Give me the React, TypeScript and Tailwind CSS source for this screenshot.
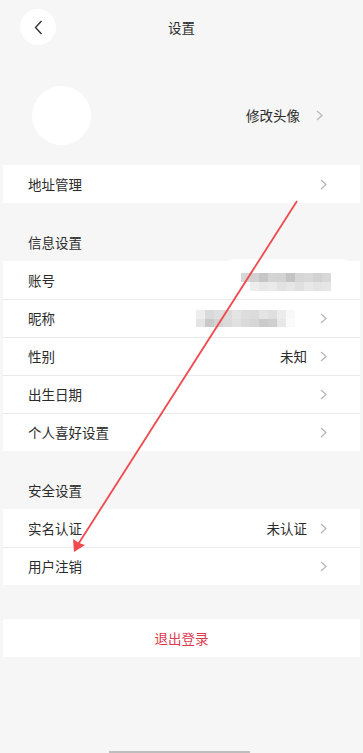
import React from "react";

const font = "font-['Noto_Sans_CJK_SC','Noto_Sans',sans-serif]";

function Chevron() {
  return (
    <svg width="7" height="11" viewBox="0 0 7 11" className="shrink-0">
      <polyline points="1,1 6,5.5 1,10" fill="none" stroke="#b5b5b5" strokeWidth="1.2" />
    </svg>
  );
}

const accountTop = ["#d6d6d6", "#d2d2d2", "#c6c6c6", "#d4d4d4", "#d3d3d3", "#c4c4c4", "#d6d6d6", "#d9d9d9", "#d2d2d2", "#d8d8d8"];
const accountBottom = ["#ffffff", "#eeeeee", "#e8e8e8", "#eaeaea", "#e2e2e2", "#e6e6e6", "#e0e0e0", "#e8e8e8", "#e4e4e4", "#e6e6e6"];
const nickTop = ["#ececec", "#d6d6d6", "#dcdcdc", "#d8d8d8", "#e2e2e2", "#dadada", "#d8d8d8", "#e2e2e2", "#dcdcdc", "#ebebeb", "#f8f8f8", "#ffffff"];
const nickBottom = ["#e2e2e2", "#c4c4c4", "#d0d0d0", "#d6d6d6", "#dedede", "#d6d6d6", "#d2d2d2", "#c6c6c6", "#cacaca", "#e6e6e6", "#fafafa", "#ffffff"];

function Mosaic({ top, bottom, h }: { top: string[]; bottom: string[]; h: number }) {
  return (
    <div className="flex flex-col">
      {[top, bottom].map((row, r) => (
        <div key={r} className="flex">
          {row.map((c, i) => (
            <div key={i} className="w-[9px]" style={{ background: c, height: h }} />
          ))}
        </div>
      ))}
    </div>
  );
}

function Row({
  label,
  value,
  first,
  children,
}: {
  label: string;
  value?: string;
  first?: boolean;
  children?: React.ReactNode;
}) {
  return (
    <div className={`relative flex h-[38px] items-center pl-[25px] pr-[33px] ${first ? "" : "border-t border-[#e9e9e9]"}`}>
      <span className="flex-1 text-[13.5px] text-[#2b2b2b]">{label}</span>
      {value && <span className="mr-[13px] text-[13.5px] text-[#2b2b2b]">{value}</span>}
      <Chevron />
      {children}
    </div>
  );
}

function SectionTitle({ title }: { title: string }) {
  return (
    <div className="flex h-[58px] items-end pb-[9px] pl-[28px] text-[13.5px] leading-[20px] text-[#2b2b2b]">{title}</div>
  );
}

export default function App() {
  return (
    <div className={`relative min-h-screen w-[363px] overflow-hidden bg-[#f6f6f6] ${font}`}>
      {/* header */}
      <div className="relative flex h-[54px] items-center justify-center">
        <div className="absolute left-[20px] top-[9px] flex h-[36px] w-[36px] items-center justify-center rounded-full bg-white">
          <svg width="9" height="15" viewBox="0 0 9 15">
            <polyline points="7.5,1 1.5,7.5 7.5,14" fill="none" stroke="#333" strokeWidth="1.4" />
          </svg>
        </div>
        <span className="text-[13.5px] text-[#2b2b2b]">设置</span>
      </div>

      {/* avatar */}
      <div className="mt-[32px] flex h-[59px] items-center pl-[32px] pr-[40px]">
        <div className="h-[59px] w-[59px] rounded-full bg-white" />
        <span className="ml-auto mr-[16px] text-[13.5px] text-[#2b2b2b]">修改头像</span>
        <Chevron />
      </div>

      <div className="mx-[3px] mt-[20px] bg-white">
        <Row label="地址管理" first />
      </div>

      <SectionTitle title="信息设置" />
      <div className="mx-[3px] bg-white">
        <Row label="账号" first>
          <div className="absolute left-[214px] top-[-2px] h-[40px] w-[142px] rounded-[18px] bg-white" />
          <div className="absolute left-[238px] top-[12px]">
            <Mosaic top={accountTop} bottom={accountBottom} h={9} />
          </div>
        </Row>
        <Row label="昵称">
          <div className="absolute left-[193px] top-[10px] opacity-90">
            <Mosaic top={nickTop} bottom={nickBottom} h={8.5} />
          </div>
        </Row>
        <Row label="性别" value="未知" />
        <Row label="出生日期" />
        <Row label="个人喜好设置" />
      </div>

      <SectionTitle title="安全设置" />
      <div className="mx-[3px] bg-white">
        <Row label="实名认证" value="未认证" first />
        <Row label="用户注销" />
      </div>

      <div className="mx-[3px] mt-[34px] flex h-[38px] items-center justify-center bg-white">
        <span className="text-[13.5px] text-[#dc3a4e]">退出登录</span>
      </div>

      {/* home indicator */}
      <div className="absolute bottom-0 left-[109px] h-[2px] w-[141px] bg-[#bdbdbd]" />

      {/* annotation arrow */}
      <svg className="pointer-events-none absolute left-0 top-0" width="363" height="753">
        <line x1="297" y1="201" x2="77" y2="546" stroke="#f04a4f" strokeWidth="1.8" />
        <polygon points="74,552 73,539 79,543 85,545" fill="#f04a4f" />
      </svg>
    </div>
  );
}
